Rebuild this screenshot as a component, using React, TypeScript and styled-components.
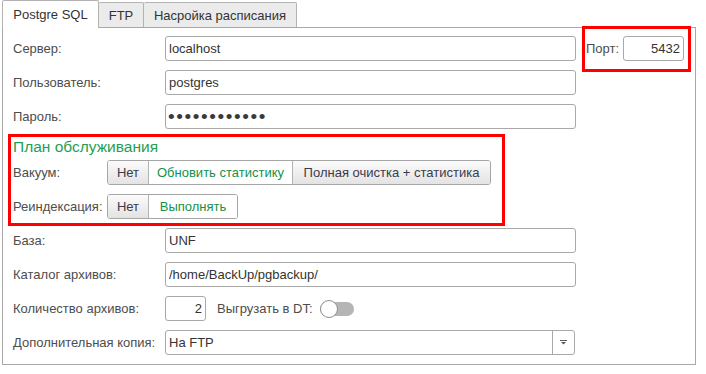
import React from 'react'
import styled, { createGlobalStyle } from 'styled-components'

const GlobalStyle = createGlobalStyle`
  html, body {
    margin: 0;
    padding: 0;
    background: #fff;
  }
  body {
    font-family: "Liberation Sans", Arial, sans-serif;
    font-size: 13px;
    color: #4d4d4d;
  }
`

const Page = styled.div`
  padding: 0 2px;
  width: 694px;
`

const TabBar = styled.div`
  display: flex;
  align-items: flex-end;
  height: 27px;
`

const Tab = styled.div<{ $active?: boolean; $w: number }>`
  box-sizing: border-box;
  width: ${p => p.$w}px;
  height: ${p => (p.$active ? 28 : 25)}px;
  margin-bottom: ${p => (p.$active ? -1 : 0)}px;
  display: flex;
  align-items: center;
  justify-content: center;
  border: 1px solid #b3b3b3;
  border-bottom: none;
  border-left: ${p => (p.$active ? '1px solid #b3b3b3' : 'none')};
  border-radius: 2px 2px 0 0;
  background: ${p => (p.$active ? '#fff' : '#ebebeb')};
  color: #333;
  font-size: 13px;
  position: relative;
  z-index: ${p => (p.$active ? 1 : 0)};
`

const Panel = styled.div`
  box-sizing: border-box;
  width: 694px;
  border: 1px solid #a8a8a8;
  padding: 8px 10px 9px 10px;
  display: flex;
  flex-direction: column;
  gap: 9px;
`

const Row = styled.div`
  display: flex;
  align-items: center;
  height: 25px;
`

const Label = styled.div<{ $w: number }>`
  width: ${p => p.$w}px;
  flex-shrink: 0;
  color: #4d4d4d;
  white-space: nowrap;
`

const Input = styled.input<{ $w: number; $right?: boolean }>`
  box-sizing: border-box;
  flex-shrink: 0;
  width: ${p => p.$w}px;
  height: 25px;
  border: 1px solid #a9a9a9;
  border-radius: 3px;
  padding: 0 3px;
  font-family: "Liberation Sans", Arial, sans-serif;
  font-size: 13px;
  color: #333;
  background: #fff;
  text-align: ${p => (p.$right ? 'right' : 'left')};
  outline: none;
`

const Password = styled(Input)`
  font-size: 19px;
  letter-spacing: 1.6px;
  padding-left: 2px;
  color: #3a3a3a;
`

const PortBox = styled.div`
  box-sizing: border-box;
  flex-shrink: 0;
  height: 46px;
  margin: -11px 0 -11px 6px;
  width: 109px;
  border: 3px solid #f00;
  padding: 0 4px 0 1px;
  display: flex;
  align-items: center;
  gap: 6px;
`

const Group = styled.div`
  box-sizing: border-box;
  width: 497px;
  margin: -4px 0 -7px -5px;
  border: 3px solid #f00;
  padding: 0 2px 4px 2px;
  display: flex;
  flex-direction: column;
  gap: 9px;
`

const GroupTitle = styled.div`
  height: 20px;
  line-height: 20px;
  margin-bottom: -6px;
  font-size: 15.5px;
  color: #1f9e55;
`

const Segmented = styled.div`
  display: flex;
  height: 25px;
  box-sizing: border-box;
  border: 1px solid #a6a6a6;
  border-radius: 3px;
  overflow: hidden;
`

const Segment = styled.div<{ $on?: boolean; $w: number }>`
  box-sizing: border-box;
  width: ${p => p.$w}px;
  display: flex;
  align-items: center;
  justify-content: center;
  font-size: 13px;
  color: ${p => (p.$on ? '#17904a' : '#3b3b4b')};
  background: ${p => (p.$on ? '#fff' : 'linear-gradient(#fbfbfb, #e3e3e3)')};
  & + & {
    border-left: 1px solid #b3b3b3;
  }
`

const InlineLabel = styled.div`
  margin: 0 7px 0 11px;
  color: #4d4d4d;
  white-space: nowrap;
`

const Switch = styled.div`
  position: relative;
  width: 34px;
  height: 14px;
  border-radius: 7px;
  background: #b5b5b5;
`

const Knob = styled.div`
  position: absolute;
  left: 0;
  top: -2px;
  box-sizing: border-box;
  width: 18px;
  height: 18px;
  border-radius: 50%;
  background: #fff;
  border: 1px solid #8f8f8f;
`

const Select = styled.div`
  box-sizing: border-box;
  flex-shrink: 0;
  width: 410px;
  height: 25px;
  display: flex;
  border: 1px solid #a9a9a9;
  border-radius: 3px;
  background: #fff;
`

const SelectValue = styled.div`
  flex: 1;
  display: flex;
  align-items: center;
  padding-left: 3px;
  color: #333;
`

const SelectButton = styled.div`
  width: 21px;
  border-left: 1px solid #a9a9a9;
  display: flex;
  align-items: center;
  justify-content: center;
`

const App = () => {
  return (
    <Page>
      <GlobalStyle />
      <TabBar>
        <Tab $active $w={97}>Postgre SQL</Tab>
        <Tab $w={45}>FTP</Tab>
        <Tab $w={153}>Насройка расписания</Tab>
      </TabBar>
      <Panel>
        <Row>
          <Label $w={152}>Сервер:</Label>
          <Input $w={411} readOnly defaultValue="localhost" />
          <PortBox>
            <Label $w={31}>Порт:</Label>
            <Input $w={61} $right readOnly defaultValue="5432" />
          </PortBox>
        </Row>
        <Row>
          <Label $w={152}>Пользователь:</Label>
          <Input $w={411} readOnly defaultValue="postgres" />
        </Row>
        <Row>
          <Label $w={152}>Пароль:</Label>
          <Password $w={411} type="password" readOnly defaultValue="passwordpass" />
        </Row>

        <Group>
          <GroupTitle>План обслуживания</GroupTitle>
          <Row>
            <Label $w={94}>Вакуум:</Label>
            <Segmented>
              <Segment $w={40}>Нет</Segment>
              <Segment $w={144} $on>Обновить статистику</Segment>
              <Segment $w={198}>Полная очистка + статистика</Segment>
            </Segmented>
          </Row>
          <Row>
            <Label $w={94}>Реиндексация:</Label>
            <Segmented>
              <Segment $w={40}>Нет</Segment>
              <Segment $w={89} $on>Выполнять</Segment>
            </Segmented>
          </Row>
        </Group>

        <Row>
          <Label $w={152}>База:</Label>
          <Input $w={411} readOnly defaultValue="UNF" />
        </Row>
        <Row>
          <Label $w={152}>Каталог архивов:</Label>
          <Input $w={411} readOnly defaultValue="/home/BackUp/pgbackup/" />
        </Row>
        <Row>
          <Label $w={152}>Количество архивов:</Label>
          <Input $w={41} $right readOnly defaultValue="2" />
          <InlineLabel>Выгрузать в DT:</InlineLabel>
          <Switch>
            <Knob />
          </Switch>
        </Row>
        <Row>
          <Label $w={152}>Дополнительная копия:</Label>
          <Select>
            <SelectValue>На FTP</SelectValue>
            <SelectButton>
              <svg width="7" height="5" viewBox="0 0 7 5">
                <rect x="0" y="0" width="7" height="1" fill="#555" />
                <path d="M1 2 L6 2 L3.5 4.5 Z" fill="#555" />
              </svg>
            </SelectButton>
          </Select>
        </Row>
      </Panel>
    </Page>
  )
}

export default App
